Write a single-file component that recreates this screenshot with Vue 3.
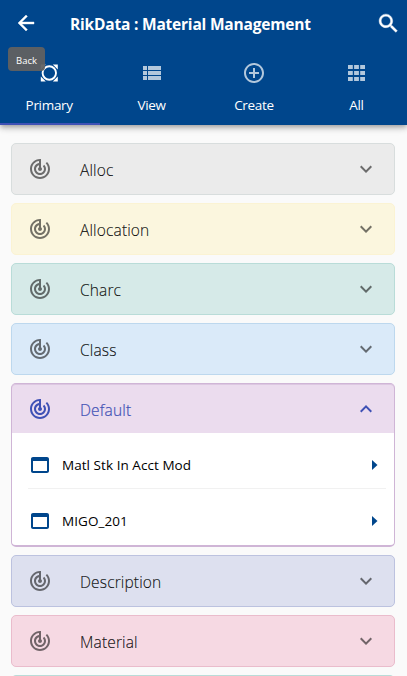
<script setup>
const tabs = [
  { label: 'Primary', cls: 'primary' },
  { label: 'View', cls: 'view', d: 'M3 14h4v-4H3v4zm0 5h4v-4H3v4zM3 9h4V5H3v4zm5 5h13v-4H8v4zm0 5h13v-4H8v4zM8 5v4h13V5H8z' },
  { label: 'Create', cls: 'create', d: 'M13 7h-2v4H7v2h4v4h2v-4h4v-2h-4V7zm-1-5C6.480 2 2 6.480 2 12s4.480 10 10 10 10-4.480 10-10S17.520 2 12 2zm0 18c-4.410 0-8-3.590-8-8s3.590-8 8-8 8 3.590 8 8-3.590 8-8 8z' },
  { label: 'All', cls: 'all', d: 'M4 8h4.800V4H4v4zm6.100 0h4.800V4h-4.800v4zM16.200 4v4H21V4h-4.800zM4 14h4.800v-4H4v4zm6.100 0h4.800v-4h-4.800v4zm6.100 0H21v-4h-4.800v4zM4 20h4.800v-4H4v4zm6.100 0h4.800v-4h-4.800v4zm6.100 0H21v-4h-4.800v4z' },
]
const panels = [
  { name: 'Alloc', tone: 'grey' },
  { name: 'Allocation', tone: 'yellow' },
  { name: 'Charc', tone: 'green' },
  { name: 'Class', tone: 'blue' },
  { name: 'Default', tone: 'purple', items: ['Matl Stk In Acct Mod', 'MIGO_201'] },
  { name: 'Description', tone: 'indigo' },
  { name: 'Material', tone: 'pink' },
  { name: '', tone: 'green' },
]
</script>

<template>
  <div class="app">
    <header class="header">
      <div class="bar">
        <button class="icon-btn" aria-label="Back">
          <svg viewBox="0 0 24 24"><path d="M20 11H7.830l5.590-5.590L12 4l-8 8 8 8 1.410-1.410L7.830 13H20v-2z" /></svg>
        </button>
        <h1>RikData : Material Management</h1>
        <button class="icon-btn search" aria-label="Search">
          <svg viewBox="0 0 24 24"><path d="M15.500 14h-.790l-.280-.270C15.410 12.590 16 11.110 16 9.500 16 5.910 13.090 3 9.500 3S3 5.910 3 9.500 5.910 16 9.500 16c1.610 0 3.090-.590 4.230-1.570l.270.280v.790l5 4.990L20.490 19l-4.990-5zm-6 0C7.010 14 5 11.990 5 9.500S7.010 5 9.500 5 14 7.010 14 9.500 11.990 14 9.500 14z" /></svg>
        </button>
      </div>
      <nav class="tabs">
        <div v-for="(t, i) in tabs" :key="t.label" class="tab" :class="[t.cls, { active: i === 0 }]">
          <svg v-if="i === 0" viewBox="0 0 24 24">
            <circle cx="12.300" cy="12" r="6.700" fill="none" stroke="currentColor" stroke-width="1.900" />
            <path d="M3.800 3.500h5L3.800 8.500zM20.800 3.500v5l-5-5zM3.800 20.500v-5l5 5zM20.800 20.500h-5l5-5z" />
          </svg>
          <svg v-else viewBox="0 0 24 24"><path :d="t.d" /></svg>
          <span>{{ t.label }}</span>
        </div>
      </nav>
      <div class="tooltip">Back</div>
    </header>
    <main class="list">
      <section v-for="(p, n) in panels" :key="n" class="panel" :class="[p.tone, { open: p.items }]">
        <div class="summary">
          <svg class="track" viewBox="0 0 24 24"><path d="M19.070 4.930l-1.410 1.410C19.100 7.790 20 9.790 20 12c0 4.420-3.580 8-8 8s-8-3.580-8-8c0-4.080 3.050-7.440 7-7.930v2.020C8.160 6.570 6 9.030 6 12c0 3.310 2.690 6 6 6s6-2.690 6-6c0-1.660-.670-3.160-1.760-4.240l-1.410 1.410C15.550 9.900 16 10.900 16 12c0 2.210-1.790 4-4 4s-4-1.790-4-4c0-1.860 1.280-3.410 3-3.860v2.140c-.600.350-1 .980-1 1.720 0 1.100.900 2 2 2s2-.900 2-2c0-.740-.400-1.380-1-1.720V2h-1C6.480 2 2 6.480 2 12s4.480 10 10 10 10-4.480 10-10c0-2.760-1.120-5.260-2.930-7.070z" /></svg>
          <span class="name">{{ p.name }}</span>
          <svg class="chevron" viewBox="0 0 24 24">
            <path v-if="p.items" d="M12 8l-6 6 1.410 1.410L12 10.830l4.590 4.580L18 14z" />
            <path v-else d="M16.590 8.590L12 13.170 7.410 8.590 6 10l6 6 6-6z" />
          </svg>
        </div>
        <ul v-if="p.items" class="items">
          <li v-for="item in p.items" :key="item">
            <svg class="window" viewBox="0 0 24 24"><path d="M19 4H5c-1.110 0-2 .900-2 2v12c0 1.100.890 2 2 2h14c1.100 0 2-.900 2-2V6c0-1.100-.890-2-2-2zm0 14H5V8h14v10z" /></svg>
            <span>{{ item }}</span>
            <svg class="arrow" viewBox="0 0 24 24"><path d="M10 17l5.500-5-5.500-5v10z" /></svg>
          </li>
        </ul>
      </section>
    </main>
  </div>
</template>

<style>
body {
  margin: 0;
  overflow: hidden;
  background: #fafafa;
}
</style>

<style scoped>
.app {
  height: 676px;
  overflow: hidden;
  background: #fafafa;
  font-family: "Open Sans", "Noto Sans", sans-serif;
}
svg {
  display: block;
  width: 24px;
  height: 24px;
  fill: currentColor;
  flex: none;
}
.header {
  position: relative;
  box-sizing: border-box;
  height: 125px;
  background: #00468c;
  color: #fff;
  box-shadow: 0 2px 4px -1px rgba(0, 0, 0, .2), 0 4px 5px rgba(0, 0, 0, .14), 0 1px 10px rgba(0, 0, 0, .12);
}
.bar {
  display: flex;
  align-items: center;
  height: 46px;
  padding: 0 6px 0 14px;
}
.icon-btn {
  padding: 0;
  border: 0;
  background: none;
  color: #fff;
}
.icon-btn svg {
  stroke: currentColor;
  stroke-width: .4;
}
.search svg {
  width: 25px;
  height: 25px;
}
h1 {
  flex: 1;
  margin: 2px 0 0 32px;
  font-size: 15.500px;
  line-height: 24px;
  font-weight: 700;
  letter-spacing: -.200px;
  white-space: nowrap;
}
.tabs {
  display: flex;
  height: 79px;
  margin: 0 -2px;
}
.tab {
  box-sizing: border-box;
  width: 102.400px;
  flex: none;
  display: flex;
  flex-direction: column;
  align-items: center;
  gap: 10px;
  padding-top: 15px;
  border-bottom: 2px solid transparent;
  font-size: 13.500px;
  letter-spacing: -.300px;
  line-height: 20px;
}
.tab svg {
  opacity: .7;
  color: #fff;
}
.tab.active {
  border-color: #3f51b5;
}
.tab.active svg {
  opacity: 1;
}
.tooltip {
  position: absolute;
  left: 8px;
  top: 47px;
  width: 37px;
  height: 24px;
  border-radius: 4px;
  background: rgba(97, 97, 97, .94);
  font-size: 9.500px;
  line-height: 27px;
  text-align: center;
}
.list {
  display: flex;
  flex-direction: column;
  gap: 8px;
  padding: 18px 12px 0 11px;
}
.panel {
  box-sizing: border-box;
  flex: none;
  border: 1px solid;
  border-radius: 5px;
  overflow: hidden;
  color: rgba(0, 0, 0, .87);
}
.summary {
  display: flex;
  align-items: center;
  height: 50px;
  padding: 0 16px;
}
.track,
.chevron {
  color: rgba(0, 0, 0, .54);
}
.name {
  flex: 1;
  margin: 2px 0 0 28px;
  font-size: 15.500px;
  line-height: 24px;
  font-weight: 300;
  letter-spacing: .150px;
  -webkit-text-stroke: .2px currentColor;
}
.grey { background: #ebebeb; border-color: #d8dddd; }
.yellow { background: #fbf6de; border-color: #fbf3d3; }
.green { background: #d6eae8; border-color: #b9dcd8; }
.blue { background: #daeaf9; border-color: #bdd8ee; }
.purple { background: #ebdcee; border-color: #cfb5d6; }
.indigo { background: #dde0ef; border-color: #bcc2df; }
.pink { background: #f6d9e3; border-color: #eabccc; }
.open {
  height: 164px;
  border-bottom-width: 2px;
  box-shadow: inset 0 1px #dcc7e1;
}
.open .summary {
  height: 49px;
}
.open .track,
.open .name,
.open .chevron {
  color: #3f51b5;
}
.items {
  margin: 0;
  padding: 4px 8px 0 16px;
  background: #fff;
  list-style: none;
  color: #000;
}
li {
  box-sizing: border-box;
  display: flex;
  align-items: center;
  height: 56px;
  font-size: 13.500px;
}
li:first-child {
  position: relative;
}
li:first-child::after {
  content: "";
  position: absolute;
  left: 0;
  right: 0;
  bottom: 4px;
  height: 1px;
  background: #f1f1f1;
}
li span {
  flex: 1;
  margin-left: 10px;
  letter-spacing: .050px;
}
.window,
.arrow {
  color: #00468c;
}
</style>
